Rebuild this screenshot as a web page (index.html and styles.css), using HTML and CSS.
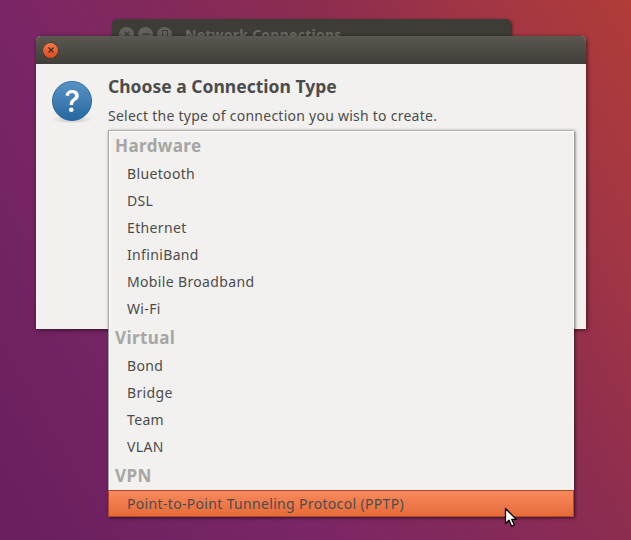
FILE: index.html
```html
<!DOCTYPE html>
<html lang="en">
<head>
<meta charset="utf-8">
<title>Choose a Connection Type</title>
<link rel="stylesheet" href="styles.css">
</head>
<body>
<div class="desktop">
  <section class="window back-window">
    <header class="back-bar">
      <div class="back-buttons">
        <span class="back-btn"><svg width="12" height="12" viewBox="0 0 12 12"><path d="M3.5 3.5l5 5M8.500 3.500l-5 5" stroke="#3c3b37" stroke-width="1.200" fill="none"/></svg></span>
        <span class="back-btn"><svg width="12" height="12" viewBox="0 0 12 12"><path d="M2.500 6h7" stroke="#3c3b37" stroke-width="1.400" fill="none"/></svg></span>
        <span class="back-btn"><svg width="12" height="12" viewBox="0 0 12 12"><rect x="3.500" y="2.500" width="5" height="7" stroke="#3c3b37" fill="none"/></svg></span>
      </div>
      <span class="back-title">Network Connections</span>
    </header>
  </section>

  <section class="window dialog">
    <header class="dialog-bar">
      <span class="close-btn"><svg width="8" height="8" viewBox="0 0 8 8"><path d="M1.500 1.500l5 5M6.500 1.500l-5 5" stroke="#3c2a20" stroke-width="1.200" fill="none"/></svg></span>
    </header>
    <div class="dialog-body">
      <svg class="question" width="42" height="48" viewBox="0 0 42 48">
        <defs>
          <linearGradient id="ball" x1="0" y1="0" x2="0" y2="1">
            <stop offset="0" stop-color="#5a94c6"/>
            <stop offset="1" stop-color="#26679f"/>
          </linearGradient>
          <radialGradient id="shade">
            <stop offset="0" stop-color="#000" stop-opacity=".2"/>
            <stop offset="1" stop-color="#000" stop-opacity="0"/>
          </radialGradient>
        </defs>
        <ellipse cx="21" cy="39.500" rx="21" ry="4" fill="url(#shade)"/>
        <circle cx="21" cy="21" r="19.500" fill="url(#ball)" stroke="#2d6ca3"/>
        <path d="M14.500 15.500c.6-3.800 3.300-5.600 6.800-5.600 3.800 0 6.500 2.200 6.500 5.500 0 2.500-1.300 3.800-3.200 5.200-1.900 1.400-2.500 2.200-2.500 4.400h-3.400c0-3.100.8-4.500 3-6.200 1.500-1.200 2.300-2 2.300-3.300 0-1.500-1.100-2.500-2.900-2.500-1.900 0-3 1-3.400 3z" fill="#fff"/>
        <circle cx="20.300" cy="29.800" r="2.300" fill="#fff"/>
      </svg>
      <div class="dialog-text">
        <h1 class="dialog-heading">Choose a Connection Type</h1>
        <p class="dialog-sub">Select the type of connection you wish to create.</p>
      </div>
    </div>
  </section>

  <ul class="menu">
    <li class="menu-group">Hardware</li>
    <li class="menu-item">Bluetooth</li>
    <li class="menu-item">DSL</li>
    <li class="menu-item">Ethernet</li>
    <li class="menu-item">InfiniBand</li>
    <li class="menu-item">Mobile Broadband</li>
    <li class="menu-item">Wi-Fi</li>
    <li class="menu-group">Virtual</li>
    <li class="menu-item">Bond</li>
    <li class="menu-item">Bridge</li>
    <li class="menu-item">Team</li>
    <li class="menu-item">VLAN</li>
    <li class="menu-group">VPN</li>
    <li class="menu-item active">Point-to-Point Tunneling Protocol (PPTP)</li>
  </ul>

  <svg class="cursor" width="14" height="21" viewBox="0 0 14 21">
    <path d="M1.500 1.500v15l3.500-3.200 2.600 5.900 2.800-1.200-2.600-5.600h4.500z" fill="#fff" stroke="#000" stroke-width="1.300" stroke-linejoin="round"/>
  </svg>
</div>
</body>
</html>
```
FILE: styles.css
```css
* { box-sizing: border-box; }
html, body { margin: 0; padding: 0; }
body { font-family: "Noto Sans", "Open Sans", sans-serif; }

.desktop {
  position: relative;
  width: 631px;
  height: 540px;
  overflow: hidden;
  background: linear-gradient(60deg, #691e5d 0%, #7a2666 33%, #8c2c50 66%, #a03545 82%, #b13c38 100%);
}

.window { position: absolute; }

.back-window {
  left: 112px;
  top: 19px;
  width: 399px;
  height: 60px;
  border-radius: 5px 5px 0 0;
  background: #3d3c37;
  box-shadow: 1px 1px 3px rgba(0, 0, 0, .55);
}
.back-bar {
  display: flex;
  align-items: center;
  height: 28px;
  padding: 2px 0 0 7px;
}
.back-buttons { display: flex; gap: 4px; }
.back-btn {
  display: flex;
  align-items: center;
  justify-content: center;
  width: 15px;
  height: 15px;
  border-radius: 50%;
  background: #62615c;
}
.back-title {
  margin-left: 13px;
  font-size: 14px;
  font-weight: 700;
  color: #6b6a64;
  letter-spacing: .25px;
  white-space: nowrap;
}

.dialog {
  left: 36px;
  top: 36px;
  width: 550px;
  height: 293px;
  border-radius: 5px 5px 0 0;
  background: #f2f1ef;
  box-shadow: 1px 1px 4px rgba(0, 0, 0, .6);
}
.dialog-bar {
  display: flex;
  align-items: center;
  height: 28px;
  padding-left: 7px;
  border-radius: 5px 5px 0 0;
  background: linear-gradient(#5a5850, #3f3e38);
}
.close-btn {
  display: flex;
  align-items: center;
  justify-content: center;
  width: 15px;
  height: 15px;
  border-radius: 50%;
  background: linear-gradient(#f27a4b, #dc4a1c);
  box-shadow: 0 0 0 .5px #3a2a22;
}
.dialog-body {
  display: flex;
  align-items: flex-start;
  padding: 11px 0 0 15px;
}
.question { flex: none; margin-top: 5px; }
.dialog-text { margin-left: 15px; }
.dialog-heading {
  margin: 0;
  font-size: 17.500px;
  line-height: 22px;
  font-weight: 700;
  color: #4c4c4c;
  letter-spacing: 0;
  white-space: nowrap;
}
.dialog-sub {
  margin: 9px 0 0;
  font-size: 14px;
  line-height: 20px;
  color: #4c4c4c;
  letter-spacing: .25px;
  white-space: nowrap;
}

.menu {
  position: absolute;
  left: 108px;
  top: 130px;
  width: 466px;
  height: 387px;
  margin: 0;
  padding: 1px 0 0;
  list-style: none;
  background: #f2f1ef;
  border: 1px solid #b4b3b0;
  border-left-color: #a9a8a5;
  border-right-color: #fff;
  box-shadow: 1px 1px 3px rgba(0, 0, 0, .6), inset 1px 1px 0 #fff;
}
.menu-group {
  height: 27px;
  padding-left: 6px;
  font-size: 17px;
  line-height: 27px;
  font-weight: 700;
  color: #a6a6a4;
  letter-spacing: .4px;
}
.menu-item {
  height: 27px;
  padding-left: 18px;
  font-size: 14px;
  line-height: 27px;
  color: #4c4c4c;
  letter-spacing: .35px;
}
.menu-group + .menu-item { margin-top: 1px; }
.menu-item + .menu-group { margin-top: 2px; }
.menu-item.active {
  height: 27px;
  margin: 1px -1px -1px -1px;
  padding-left: 18px;
  border: 1px solid #b04a24;
  line-height: 25px;
  background: linear-gradient(#f9895c, #e66b39);
  letter-spacing: .33px;
}

.cursor {
  position: absolute;
  left: 504px;
  top: 507px;
}
```
